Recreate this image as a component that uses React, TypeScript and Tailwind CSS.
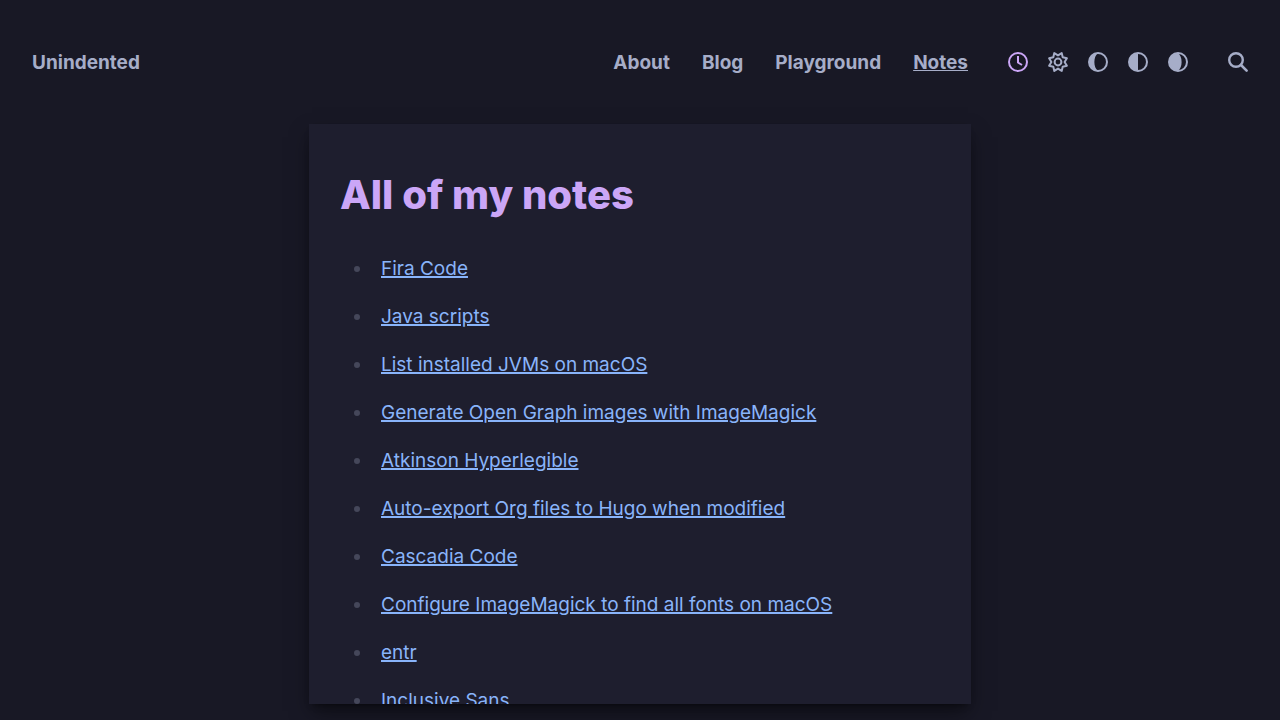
import React from "react";

const navLinks = ["About", "Blog", "Playground"];

const notes = [
  "Fira Code",
  "Java scripts",
  "List installed JVMs on macOS",
  "Generate Open Graph images with ImageMagick",
  "Atkinson Hyperlegible",
  "Auto-export Org files to Hugo when modified",
  "Cascadia Code",
  "Configure ImageMagick to find all fonts on macOS",
  "entr",
  "Inclusive Sans",
];

const ring = <circle cx="10" cy="10" r="9" fill="none" stroke="currentColor" strokeWidth="2" />;

const themes = [
  {
    label: "Automatic theme",
    active: true,
    icon: (
      <>
        {ring}
        <path d="M10 4V10.5L14 13" fill="none" stroke="currentColor" strokeWidth="2" />
      </>
    ),
  },
  {
    label: "Light theme",
    icon: (
      <g fill="none" stroke="currentColor" strokeWidth="2" strokeLinejoin="round">
        <circle cx="10" cy="10" r="3.4" />
        <path d="M10 3.4L13.7 1.1L14.7 5.3L18.9 6.3L16.6 10L18.9 13.7L14.7 14.7L13.7 18.9L10 16.6L6.3 18.9L5.3 14.7L1.1 13.7L3.4 10L1.1 6.3L5.3 5.3L6.3 1.1Z" />
      </g>
    ),
  },
  {
    label: "Dim theme",
    icon: (
      <>
        {ring}
        <path d="M10 1C5.200 4.500 5.200 15.500 10 19A9 9 0 0 1 10 1Z" fill="currentColor" />
      </>
    ),
  },
  {
    label: "Dark theme",
    icon: (
      <>
        {ring}
        <path d="M10 1V19A9 9 0 0 1 10 1Z" fill="currentColor" />
      </>
    ),
  },
  {
    label: "Darkest theme",
    icon: (
      <>
        {ring}
        <path d="M10 1C14.800 4.500 14.800 15.500 10 19A9 9 0 0 1 10 1Z" fill="currentColor" />
      </>
    ),
  },
];

export default function App() {
  return (
    <div className="flex h-screen flex-col bg-[#181825] pb-4 font-['Inter',sans-serif] text-[19px] text-[#a6adc8]">
      <header className="flex h-31 shrink-0 items-center justify-between px-8 font-bold">
        <a href="#home" className="pt-0.5">
          Unindented
        </a>
        <div className="flex items-center gap-10">
          <nav className="flex gap-8 pt-0.5">
            {navLinks.map((name) => (
              <a key={name} href={"#" + name.toLowerCase()}>
                {name}
              </a>
            ))}
            <a href="#notes" aria-current="page" className="underline">
              Notes
            </a>
          </nav>
          <div className="flex gap-5">
            {themes.map((theme) => (
              <button
                key={theme.label}
                type="button"
                aria-label={theme.label}
                aria-pressed={!!theme.active}
                className={theme.active ? "text-[#cba6f7]" : ""}
              >
                <svg viewBox="0 0 20 20" className="size-5 overflow-visible" aria-hidden="true">
                  {theme.icon}
                </svg>
              </button>
            ))}
          </div>
          <button type="button" aria-label="Search">
            <svg viewBox="0 0 20 20" className="size-5" fill="none" stroke="currentColor" aria-hidden="true">
              <circle cx="8" cy="8" r="6.800" strokeWidth="2.400" />
              <path d="M13 13L18.6 18.6" strokeWidth="2.600" strokeLinecap="round" />
            </svg>
          </button>
        </div>
      </header>
      <main className="mx-auto min-h-0 w-full max-w-[662px] flex-1 shadow-[0_10px_20px_-3px_rgba(0,0,0,0.5),0_4px_6px_-4px_rgba(0,0,0,0.5)]">
        <div className="h-full overflow-y-auto bg-[#1e1e2e] px-[31px] pt-[45px] [scrollbar-width:none]">
          <h1 className="text-[40px] leading-[52px] font-extrabold text-[#cba6f7]">All of my notes</h1>
          <ul className="mt-8 flex flex-col gap-4">
            {notes.map((note) => (
              <li key={note} className="flex items-center leading-8">
                <span className="mr-[21px] ml-3.5 size-1.5 rounded-full bg-[#45475a]" aria-hidden="true" />
                <a
                  href={"#" + note.toLowerCase().replace(/ /g, "-")}
                  className="text-[#89b4fa] underline decoration-2"
                >
                  {note}
                </a>
              </li>
            ))}
          </ul>
        </div>
      </main>
    </div>
  );
}
